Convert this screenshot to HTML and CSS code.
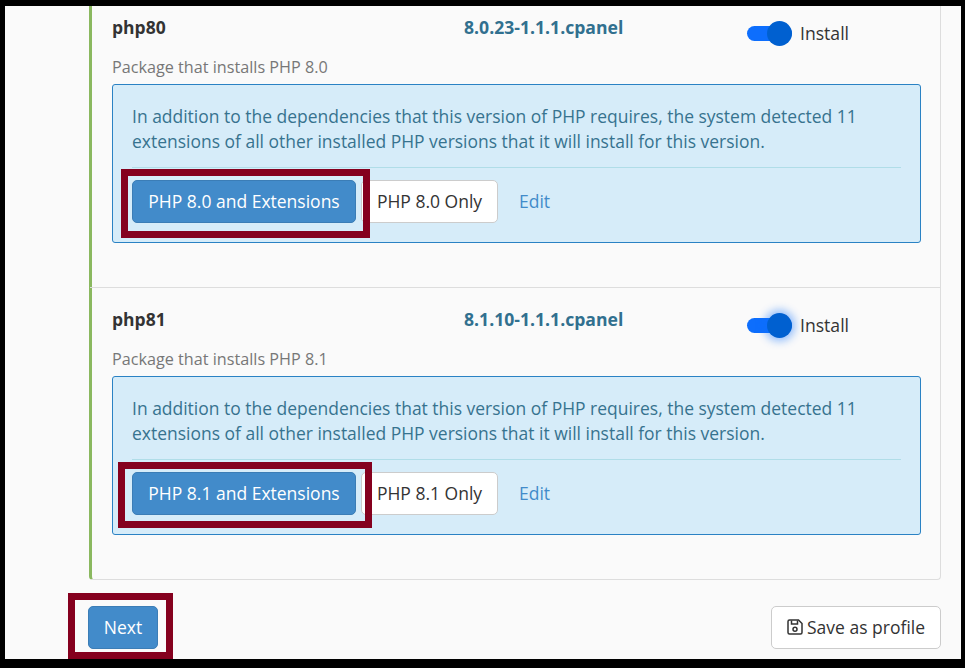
FILE: index.html
```html
<!DOCTYPE html>
<html lang="en">
<head>
<meta charset="utf-8">
<title>PHP packages</title>
<link rel="stylesheet" href="styles.css">
</head>
<body>
<div class="frame">
  <div class="page">
    <section class="panel">
      <article class="row">
        <div class="row-head">
          <div class="pkg-name">php80</div>
          <div class="pkg-version">8.0.23-1.1.1.cpanel</div>
          <label class="toggle-wrap"><span class="toggle"><span class="knob"></span></span><span class="toggle-label">Install</span></label>
        </div>
        <p class="pkg-desc">Package that installs PHP 8.0</p>
        <div class="alert">
          <p class="alert-text">In addition to the dependencies that this version of PHP requires, the system detected 11 extensions of all other installed PHP versions that it will install for this version.</p>
          <hr class="alert-rule">
          <div class="actions">
            <span class="marked"><a class="btn btn-primary btn-wide">PHP 8.0 and Extensions</a><span class="mark mark-one"></span></span>
            <a class="btn btn-default btn-only">PHP 8.0 Only</a>
            <a class="edit-link">Edit</a>
          </div>
        </div>
      </article>
      <article class="row row-last">
        <div class="row-head">
          <div class="pkg-name">php81</div>
          <div class="pkg-version">8.1.10-1.1.1.cpanel</div>
          <label class="toggle-wrap"><span class="toggle toggle-focus"><span class="knob"></span></span><span class="toggle-label">Install</span></label>
        </div>
        <p class="pkg-desc">Package that installs PHP 8.1</p>
        <div class="alert">
          <p class="alert-text">In addition to the dependencies that this version of PHP requires, the system detected 11 extensions of all other installed PHP versions that it will install for this version.</p>
          <hr class="alert-rule">
          <div class="actions">
            <span class="marked"><a class="btn btn-primary btn-wide">PHP 8.1 and Extensions</a><span class="mark mark-two"></span></span>
            <a class="btn btn-default btn-only">PHP 8.1 Only</a>
            <a class="edit-link">Edit</a>
          </div>
        </div>
      </article>
    </section>
    <footer class="footer">
      <span class="marked"><a class="btn btn-primary btn-next">Next</a><span class="mark mark-three"></span></span>
      <a class="btn btn-default btn-save">
        <svg class="save-icon" viewBox="0 0 16 16" aria-hidden="true"><path d="M2.5 1h9L15 4.5v9a1.5 1.5 0 0 1-1.5 1.5h-11A1.5 1.5 0 0 1 1 13.500v-11A1.5 1.500 0 0 1 2.500 1z" fill="none" stroke="currentColor" stroke-width="1.500"/><path d="M4.500 1.500v3.500h6v-3.500" fill="none" stroke="currentColor" stroke-width="1.500"/><circle cx="8" cy="10.200" r="2" fill="none" stroke="currentColor" stroke-width="1.500"/></svg>
        Save as profile
      </a>
    </footer>
  </div>
</div>
</body>
</html>
```
FILE: styles.css
```css
* { box-sizing: border-box; }
html, body { margin: 0; padding: 0; }
body {
  font-family: "Open Sans", sans-serif;
  font-size: 17.500px;
  color: #333;
}
.frame {
  width: 965px;
  height: 668px;
  border-style: solid;
  border-color: #000;
  border-width: 6px 4px 9px 5px;
  background: #fafafa;
  overflow: hidden;
}
.page { padding: 0 20px 0 84px; }
.panel {
  margin-top: -10px;
  border: 1px solid #ddd;
  border-left: 3px solid #8ab85f;
  border-top: 0;
  border-radius: 0 0 4px 4px;
}
.row {
  height: 292px;
  margin-left: -2px;
  padding: 20px 19px 0 22px;
  border-bottom: 1px solid #ddd;
}
.row-last { border-bottom: 0; height: 291px; }
.row-head {
  display: grid;
  grid-template-columns: 352px 283px 1fr;
  height: 30px;
}
.pkg-name { font-weight: 700; font-size: 17.500px; line-height: 22px; color: #333; }
.pkg-version { font-weight: 700; font-size: 17.600px; line-height: 22px; color: #31708f; }
.toggle-wrap { display: flex; align-items: center; gap: 8px; margin-top: 5px; height: 25px; }
.toggle {
  position: relative;
  display: block;
  width: 45px;
  height: 15px;
  border-radius: 8px;
  background: #0d6efd;
}
.knob {
  position: absolute;
  right: 0;
  top: -5px;
  width: 25px;
  height: 25px;
  border-radius: 50%;
  background: #0060d0;
}
.toggle-focus .knob { box-shadow: 0 0 8px 3px rgba(13, 110, 253, .45); }
.toggle-label { padding-bottom: 2px; font-size: 17.600px; line-height: 24px; color: #333; }
.pkg-desc {
  margin: 9px 0 5px;
  font-size: 16.200px;
  line-height: 24px;
  color: #777;
}
.alert {
  height: 159px;
  padding: 19px;
  border: 1px solid #2a82c4;
  border-radius: 3px;
  background: #d6ecf9;
  color: #37738f;
}
.alert-text { margin: 0; font-size: 17.480px; line-height: 25px; }
.alert-rule { margin: 13px 0 12px; border: 0; border-top: 1px solid #b0dde8; }
.actions { display: flex; align-items: center; }
.btn {
  display: inline-flex;
  align-items: center;
  justify-content: center;
  height: 43px;
  padding-bottom: 2px;
  border: 1px solid transparent;
  border-radius: 5px;
  font-size: 17.500px;
  white-space: nowrap;
}
.btn-primary { background: #428bca; border-color: #3b7db6; color: #fff; }
.btn-default { background: #fff; border-color: #ccc; color: #333; }
.btn-wide { width: 224px; }
.btn-only { width: 137px; margin-left: 5px; }
.edit-link { margin-left: 21px; padding-bottom: 2px; font-size: 17.500px; color: #428bca; }
.marked { position: relative; display: inline-flex; }
.mark { position: absolute; border: 7px solid #85001e; }
.mark-one { left: -11px; top: -11px; width: 249px; height: 69px; }
.mark-two { left: -14px; top: -10px; width: 254px; height: 66px; }
.mark-three { left: -20px; top: -13px; width: 105px; height: 66px; }
.footer {
  display: flex;
  justify-content: space-between;
  margin: 26px 0 0 -1px;
}
.btn-next { width: 70px; }
.btn-save { width: 170px; gap: 4px; }
.save-icon { width: 16px; height: 16px; color: #333; }
```
